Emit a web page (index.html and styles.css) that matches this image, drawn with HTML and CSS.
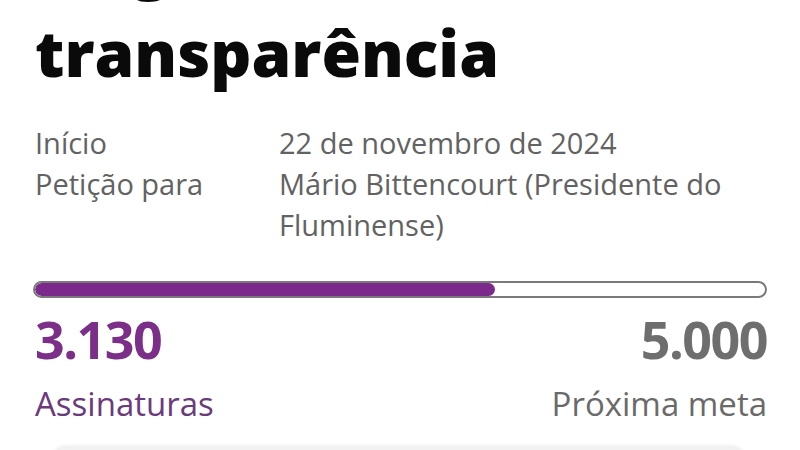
FILE: index.html
```html
<!DOCTYPE html>
<html lang="pt-BR">
<head>
<meta charset="utf-8">
<link rel="stylesheet" href="styles.css">
</head>
<body>
<main class="page">
  <h1 class="title">Exigimos transparência</h1>
  <dl class="info">
    <dt>Início</dt>
    <dd>22 de novembro de 2024</dd>
    <dt>Petição para</dt>
    <dd>Mário Bittencourt (Presidente do Fluminense)</dd>
  </dl>
  <div class="bar"><div class="fill" style="width: 63%"></div></div>
  <div class="stats">
    <div class="stat">
      <div class="num num-current">3.130</div>
      <div class="label label-current">Assinaturas</div>
    </div>
    <div class="stat stat-right">
      <div class="num num-goal">5.000</div>
      <div class="label label-goal">Próxima meta</div>
    </div>
  </div>
  <div class="card"></div>
</main>
</body>
</html>
```

FILE: styles.css
```css
html, body {
  margin: 0;
  padding: 0;
  background: #ffffff;
  overflow: hidden;
}
body {
  font-family: "Open Sans", "Noto Sans", sans-serif;
}
.page {
  padding: 0 33px 0 35px;
}
.title {
  margin: -82px 0 0 0;
  font-size: 64px;
  line-height: 90px;
  font-weight: 800;
  color: #0a0a0a;
}
.info {
  margin: 24px 0 0 0;
  display: grid;
  grid-template-columns: 244px 1fr;
  font-size: 29px;
  line-height: 41px;
  color: #626262;
}
.info dt, .info dd {
  margin: 0;
}
.bar {
  margin: 36px 0 0 -2px;
  height: 13px;
  border: 2px solid #7a7a7a;
  border-radius: 10px;
  overflow: hidden;
  background: #ffffff;
}
.fill {
  height: 100%;
  background: #7b2a8b;
  border-radius: 10px;
}
.stats {
  display: flex;
  justify-content: space-between;
  margin-top: 10px;
}
.stat-right {
  text-align: right;
}
.num {
  font-size: 52px;
  line-height: 62px;
  font-weight: 700;
  letter-spacing: -1.5px;
}
.num-current {
  color: #7b2f88;
}
.num-goal {
  color: #6e6e6e;
  margin-right: 0;
}
.label {
  margin-top: 14px;
  font-size: 33px;
  line-height: 40px;
}
.label-current {
  color: #6b3a7c;
}
.label-goal {
  color: #6a6a6a;
}
.card {
  margin: 22px 22px 0 17px;
  height: 60px;
  background: #f2f2f2;
  border-radius: 14px;
  box-shadow: 0 -1px 3px rgba(0,0,0,0.06);
}
```
